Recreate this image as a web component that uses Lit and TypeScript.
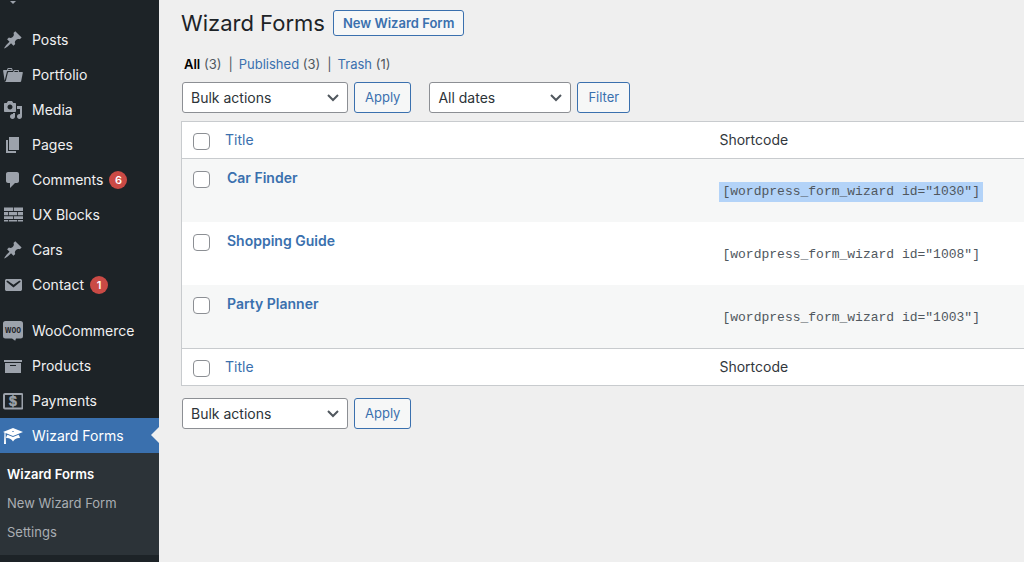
import { LitElement, html, css, svg } from "lit";
import { customElement } from "lit/decorators.js";
import { classMap } from "lit/directives/class-map.js";

const pin = svg`<path d="M10.44 3.02l1.82-1.82 6.36 6.35-1.83 1.82c-1.05-.68-2.48-.57-3.41.36l-.75.75c-.92.93-1.04 2.35-.35 3.41l-1.83 1.82-2.41-2.41-2.8 2.79c-.42.42-3.38 2.71-3.8 2.29s1.86-3.39 2.28-3.81l2.79-2.79L4.1 9.36l1.83-1.82c1.05.69 2.48.57 3.4-.36l.75-.75c.93-.92 1.05-2.35.36-3.41z"/>`;

const icons = {
  pin,
  portfolio: svg`<path d="M4 5H.78c-.37 0-.74.32-.69.84l1.56 9.99S3.5 8.47 3.86 6.7c.11-.53.61-.7.98-.7H10s-.7-2.08-.77-2.31C9.11 3.25 8.89 3 8.45 3H5.14c-.36 0-.7.23-.8.64C4.25 4.04 4 5 4 5zm4.88 0h-4s.42-1 .87-1h2.13c.48 0 1 1 1 1zM2.67 16.25c-.31.47-.76.75-1.26.75h15.73c.54 0 .92-.31 1.03-.83.44-2.19 1.68-8.44 1.68-8.44.07-.5-.3-.73-.62-.73H16V5.53c0-.16-.26-.53-.66-.53h-3.76c-.52 0-.87.58-.87.58L10 7H5.59c-.32 0-.63.19-.69.5 0 0-1.59 6.7-1.72 7.33-.07.37-.22.99-.51 1.42zM15.38 7H11s.58-1 1.13-1h2.29c.71 0 .96 1 .96 1z"/>`,
  media: svg`<path d="M13 11V4c0-.55-.45-1-1-1h-1.67L9 1H5L3.67 3H2c-.55 0-1 .45-1 1v7c0 .55.45 1 1 1h10c.55 0 1-.45 1-1zM7 4.5c1.38 0 2.5 1.12 2.5 2.5S8.38 9.5 7 9.5 4.5 8.38 4.5 7 5.62 4.5 7 4.5zM14 6h5v10.5c0 1.38-1.12 2.5-2.5 2.5S14 17.88 14 16.5s1.12-2.5 2.5-2.5c.17 0 .34.02.5.05V9h-3V6zm-4 8.05V13h2v3.5c0 1.38-1.12 2.5-2.5 2.5S7 17.88 7 16.5 8.12 14 9.5 14c.17 0 .34.02.5.05z"/>`,
  page: svg`<path d="M6 15V2h10v13H6zm-1 1h8v2H3V5h2v11z"/>`,
  comment: svg`<path d="M5 2h9c1.100 0 2 .9 2 2v7c0 1.100-.9 2-2 2h-2l-5 5v-5H5c-1.100 0-2-.9-2-2V4c0-1.100.9-2 2-2z"/>`,
  bricks: svg`<path d="M1 2.500h9v3.400H1zM10.800 2.500H20v3.400h-9.200zM1 7h4v3.200H1zM5.800 7h8.400v3.200H5.800zM15 7h5v3.200h-5zM1 11.300h9v2.600H1zM10.800 11.300H20v2.600h-9.200zM1 14.900h4v1.600H1zM5.800 14.900h8.400v1.600H5.800zM15 14.900h5v1.600h-5z"/>`,
  email: svg`<path d="M3.87 4h13.25C18.37 4 19 4.59 19 5.79v8.42c0 1.19-.63 1.79-1.88 1.79H3.87c-1.25 0-1.88-.6-1.88-1.79V5.79c0-1.2.63-1.79 1.88-1.79zm6.62 8.6l6.74-5.53c.24-.2.43-.66.13-1.07-.29-.41-.82-.42-1.17-.17l-5.7 3.86L4.8 5.83c-.35-.25-.88-.24-1.17.17-.3.41-.11.87.13 1.07z"/>`,
  woo: svg`<path d="M2.500 0h15Q20 0 20 2.500v12.500q0 2.500-2.500 2.500H13l-.8 2.200-3.200-2.200H2.500Q0 17.500 0 15V2.500Q0 0 2.500 0z"/><text class="woo" x="10" y="12" text-anchor="middle">WOO</text>`,
  archive: svg`<path d="M19 4v2H1V4h18zM2 7h16v10H2V7zm11 3V9H7v1h6z"/>`,
  money: svg`<rect class="frame" x="1" y="3" width="18.500" height="14.500" rx="1"/><text class="dollar" x="10" y="15" text-anchor="middle">$</text>`,
  learn: svg`<path d="M10 10L2.540 7.020 3 18H1l.48-11.410L0 6l10-4 10 4zm0-5c-.55 0-1 .22-1 .5s.45.5 1 .5 1-.22 1-.5-.45-.5-1-.5zm0 6l5.570-2.230c.71.94 1.200 2.070 1.360 3.300-.3-.04-.61-.07-.93-.07-2.550 0-4.780 1.370-6 3.410C8.780 13.370 6.550 12 4 12c-.32 0-.63.03-.93.07.16-1.230.65-2.360 1.360-3.300z"/>`,
};

type MenuItem = { label: string; icon: keyof typeof icons; count?: number; current?: boolean };

const menuGroups: MenuItem[][] = [
  [
    { label: "Posts", icon: "pin" },
    { label: "Portfolio", icon: "portfolio" },
    { label: "Media", icon: "media" },
    { label: "Pages", icon: "page" },
    { label: "Comments", icon: "comment", count: 6 },
    { label: "UX Blocks", icon: "bricks" },
    { label: "Cars", icon: "pin" },
    { label: "Contact", icon: "email", count: 1 },
  ],
  [
    { label: "WooCommerce", icon: "woo" },
    { label: "Products", icon: "archive" },
    { label: "Payments", icon: "money" },
    { label: "Wizard Forms", icon: "learn", current: true },
  ],
];

@customElement("admin-menu")
class AdminMenu extends LitElement {
  static styles = css`
    :host { display: block; background: #1d2327; color: #f0f0f1; overflow: hidden; font-size: 14px; }
    .previous { height: 22px; padding-left: 9px; line-height: 0; fill: #9ca2ab; }
    .group { list-style: none; margin: 0; padding: 0; }
    .group + .group { margin-top: 11px; }
    .item { display: flex; align-items: center; height: 35px; padding-left: 3px; gap: 9px; color: inherit; text-decoration: none; position: relative; }
    .icon { width: 20px; height: 20px; fill: #9ca2ab; flex: none; }
    .count { min-width: 18px; height: 18px; margin-left: -3px; border-radius: 9px; background: #ca4a45; color: #fff; font-size: 11px; font-weight: 600; line-height: 18px; text-align: center; }
    .current { background: #3a70ae; color: #fff; }
    .current .icon { fill: #fff; }
    .current::after { content: ""; position: absolute; right: 0; top: 9px; border: 8px solid transparent; border-right-color: #efefef; border-left: 0; }
    .frame { fill: none; stroke: #9ca2ab; stroke-width: 2px; }
    .dollar { font: 700 14px "Liberation Sans", sans-serif; stroke: #9ca2ab; stroke-width: 0.5; }
    .woo { font: 700 8px "Liberation Sans Narrow", "Open Sans Condensed", "DejaVu Sans Condensed", sans-serif; fill: #1d2327; }
    .submenu { list-style: none; margin: 0; padding: 7px 0 8px; background: #2c3338; }
    .sublink { display: block; padding: 0 7px; line-height: 29px; font-size: 13px; color: #a9aeb3; text-decoration: none; }
    .chosen { color: #fff; font-weight: 600; }
  `;
  render() {
    return html`<nav aria-label="Main menu">
      <div class="previous"><svg width="8" height="4" viewBox="0 0 8 4"><path d="M1 0h6L4 3z" /></svg></div>
      ${menuGroups.map(
        (group) => html`<ul class="group">
          ${group.map(
            (item) => html`<li>
              <a href="#" class=${classMap({ item: true, current: !!item.current })}>
                <svg class="icon" viewBox="0 0 20 20" aria-hidden="true">${icons[item.icon]}</svg>
                <span>${item.label}</span>
                ${item.count ? html`<span class="count">${item.count}</span>` : ""}
              </a>
            </li>`
          )}
        </ul>`
      )}
      <ul class="submenu">
        ${["Wizard Forms", "New Wizard Form", "Settings"].map(
          (label, i) => html`<li><a href="#" class=${classMap({ sublink: true, chosen: i === 0 })}>${label}</a></li>`
        )}
      </ul>
    </nav>`;
  }
}

const forms = [
  { title: "Car Finder", id: 1030, selected: true },
  { title: "Shopping Guide", id: 1008, selected: false },
  { title: "Party Planner", id: 1003, selected: false },
];

@customElement("app-root")
class AppRoot extends LitElement {
  static styles = css`
    :host { display: grid; grid-template-columns: 159px minmax(0, 1fr); height: 100vh; overflow: hidden; background: #efefef; color: #32373c; font-family: Inter, "Liberation Sans", sans-serif; font-size: 14px; }
    a { color: #3a70ae; text-decoration: none; }
    .content { padding: 10px 0 0 22px; }
    .heading { display: flex; align-items: center; gap: 8px; height: 26px; }
    .title { margin: 0; font-size: 22px; font-weight: 400; line-height: 26px; color: #1d2327; }
    .button { box-sizing: border-box; height: 31px; padding: 0 10px; border: 1px solid #3a70ae; border-radius: 3px; background: #f6f7f7; color: #3a70ae; font: 400 13px/29px Inter, sans-serif; }
    .add { height: 26px; padding: 0 9px; line-height: 24px; font-weight: 600; }
    .views { display: flex; gap: 7px; margin: 18px 0 8px 3px; padding: 0; list-style: none; font-size: 13px; line-height: 20px; color: #50575e; }
    .view + .view::before { content: "|"; margin-right: 6px; }
    .all { color: #000; font-weight: 600; }
    .toolbar { display: flex; gap: 6px; margin-left: 1px; }
    .select { box-sizing: border-box; width: 166px; height: 31px; padding: 0 24px 0 8px; border: 1px solid #8c8f94; border-radius: 3px; appearance: none; color: #2c3338; font: 14px/29px Inter, sans-serif; background: #fff url("data:image/svg+xml,%3Csvg xmlns='http://www.w3.org/2000/svg' width='12' height='8' fill='none' stroke='%2350575e' stroke-width='2'%3E%3Cpath d='M1 1l5 5 5-5'/%3E%3C/svg%3E") no-repeat right 8px center; }
    .dates { width: 142px; margin-left: 12px; }
    .table { width: 100%; margin: 8px 0 12px; border: 1px solid #c8cbce; border-right: 0; border-collapse: separate; border-spacing: 0; table-layout: fixed; background: #fff; }
    .table th, .table td { box-sizing: border-box; padding: 0 8px 0 7px; text-align: left; font-weight: 400; vertical-align: top; }
    .table .check { width: 36px; padding: 11px 0 0 11px; line-height: 0; }
    .table .code-col { width: 37%; }
    .table thead th, .table tfoot th { height: 37px; line-height: 36px; }
    .table thead th { border-bottom: 1px solid #c8cbce; }
    .table tfoot th { border-top: 1px solid #c8cbce; }
    .table tbody td, .table tbody th { height: 63px; line-height: 38px; }
    .table tbody tr:nth-child(odd) { background: #f6f7f7; }
    .table tbody .name { padding-left: 9px; font-weight: 600; }
    .table tbody .code { padding-top: 21px; line-height: 20px; }
    .table tbody .check { padding-top: 12px; line-height: 0; }
    .box { appearance: none; box-sizing: border-box; width: 17px; height: 17px; margin: 0; border: 1px solid #8c8f94; border-radius: 4px; background: #fff; }
    .shortcode { display: inline-block; padding: 0 3px; font: 13px/20px "Liberation Mono", monospace; color: #50575e; }
    .selected { background: #b3d3f8; }
  `;

  private columnRow(edge: string) {
    return html`<tr>
      <th class="check"><input class="box" type="checkbox" aria-label="Select all (${edge})" /></th>
      <th><a href="#">Title</a></th>
      <th class="code-col">Shortcode</th>
    </tr>`;
  }

  private bulk(edge: string) {
    return html`<select class="select" aria-label="Bulk actions (${edge})"><option>Bulk actions</option></select>
      <button class="button">Apply</button>`;
  }

  render() {
    return html`<admin-menu></admin-menu>
      <main class="content">
        <div class="heading">
          <h1 class="title">Wizard Forms</h1>
          <button class="button add">New Wizard Form</button>
        </div>
        <ul class="views">
          <li class="view"><a class="all" href="#">All</a> (3)</li>
          <li class="view"><a href="#">Published</a> (3)</li>
          <li class="view"><a href="#">Trash</a> (1)</li>
        </ul>
        <div class="toolbar">
          ${this.bulk("top")}
          <select class="select dates" aria-label="Filter by date"><option>All dates</option></select>
          <button class="button">Filter</button>
        </div>
        <table class="table">
          <thead>${this.columnRow("top")}</thead>
          <tbody>
            ${forms.map(
              (form) => html`<tr>
                <td class="check"><input class="box" type="checkbox" aria-label="Select ${form.title}" /></td>
                <th class="name"><a href="#">${form.title}</a></th>
                <td class="code"><code class=${classMap({ shortcode: true, selected: form.selected })}>[wordpress_form_wizard id="${form.id}"]</code></td>
              </tr>`
            )}
          </tbody>
          <tfoot>${this.columnRow("bottom")}</tfoot>
        </table>
        <div class="toolbar">${this.bulk("bottom")}</div>
      </main>`;
  }
}
